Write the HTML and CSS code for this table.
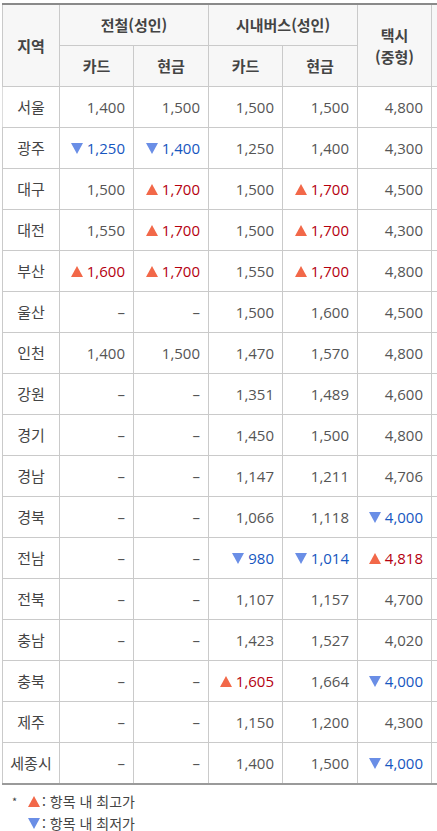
FILE: index.html
```html
<!DOCTYPE html>
<html lang="ko">
<head>
<meta charset="utf-8">
<title>대중교통 요금</title>
<link rel="stylesheet" href="styles.css">
</head>
<body>
<div class="wrap">
<table class="fare">
<colgroup>
<col class="c-region"><col class="c-num"><col class="c-num2"><col class="c-num"><col class="c-num2"><col class="c-num"><col class="c-extra">
</colgroup>
<thead>
<tr>
<th rowspan="2">지역</th>
<th colspan="2">전철(성인)</th>
<th colspan="2">시내버스(성인)</th>
<th rowspan="2" class="two">택시<br>(중형)</th>
<th rowspan="2" class="extra"></th>
</tr>
<tr>
<th>카드</th><th>현금</th><th>카드</th><th>현금</th>
</tr>
</thead>
<tbody>
<tr><th>서울</th><td>1,400</td><td>1,500</td><td>1,500</td><td>1,500</td><td>4,800</td><td class="extra"></td></tr>
<tr><th>광주</th><td class="lo"><i class="dn"></i>1,250</td><td class="lo"><i class="dn"></i>1,400</td><td>1,250</td><td>1,400</td><td>4,300</td><td class="extra"></td></tr>
<tr><th>대구</th><td>1,500</td><td class="hi"><i class="up"></i>1,700</td><td>1,500</td><td class="hi"><i class="up"></i>1,700</td><td>4,500</td><td class="extra"></td></tr>
<tr><th>대전</th><td>1,550</td><td class="hi"><i class="up"></i>1,700</td><td>1,500</td><td class="hi"><i class="up"></i>1,700</td><td>4,300</td><td class="extra"></td></tr>
<tr><th>부산</th><td class="hi"><i class="up"></i>1,600</td><td class="hi"><i class="up"></i>1,700</td><td>1,550</td><td class="hi"><i class="up"></i>1,700</td><td>4,800</td><td class="extra"></td></tr>
<tr><th>울산</th><td>–</td><td>–</td><td>1,500</td><td>1,600</td><td>4,500</td><td class="extra"></td></tr>
<tr><th>인천</th><td>1,400</td><td>1,500</td><td>1,470</td><td>1,570</td><td>4,800</td><td class="extra"></td></tr>
<tr><th>강원</th><td>–</td><td>–</td><td>1,351</td><td>1,489</td><td>4,600</td><td class="extra"></td></tr>
<tr><th>경기</th><td>–</td><td>–</td><td>1,450</td><td>1,500</td><td>4,800</td><td class="extra"></td></tr>
<tr><th>경남</th><td>–</td><td>–</td><td>1,147</td><td>1,211</td><td>4,706</td><td class="extra"></td></tr>
<tr><th>경북</th><td>–</td><td>–</td><td>1,066</td><td>1,118</td><td class="lo"><i class="dn"></i>4,000</td><td class="extra"></td></tr>
<tr><th>전남</th><td>–</td><td>–</td><td class="lo"><i class="dn"></i>980</td><td class="lo"><i class="dn"></i>1,014</td><td class="hi"><i class="up"></i>4,818</td><td class="extra"></td></tr>
<tr><th>전북</th><td>–</td><td>–</td><td>1,107</td><td>1,157</td><td>4,700</td><td class="extra"></td></tr>
<tr><th>충남</th><td>–</td><td>–</td><td>1,423</td><td>1,527</td><td>4,020</td><td class="extra"></td></tr>
<tr><th>충북</th><td>–</td><td>–</td><td class="hi"><i class="up"></i>1,605</td><td>1,664</td><td class="lo"><i class="dn"></i>4,000</td><td class="extra"></td></tr>
<tr><th>제주</th><td>–</td><td>–</td><td>1,150</td><td>1,200</td><td>4,300</td><td class="extra"></td></tr>
<tr><th>세종시</th><td>–</td><td>–</td><td>1,400</td><td>1,500</td><td class="lo"><i class="dn"></i>4,000</td><td class="extra"></td></tr>
</tbody>
</table>
</div>
<ul class="legend">
<li><span class="star">*</span><i class="up"></i>: 항목 내 최고가</li>
<li><span class="star"></span><i class="dn"></i>: 항목 내 최저가</li>
</ul>
</body>
</html>
```

FILE: styles.css
```css
html, body {
  margin: 0;
  padding: 0;
  background: #fff;
}
body {
  font-family: "Open Sans", "Noto Sans CJK KR", sans-serif;
  color: #555;
  width: 437px;
  overflow: hidden;
}
.wrap {
  padding: 3px 0 0 2px;
  width: 435px;
  overflow: hidden;
}
.fare {
  border-collapse: collapse;
  table-layout: fixed;
  width: 470px;
  border-top: 2px solid #8a8a8a;
  border-bottom: 2px solid #9a9a9a;
  font-size: 15px;
}
.c-region { width: 57px; }
.c-num { width: 74px; }
.c-num2 { width: 75px; }
.c-extra { width: 41px; }
.fare th, .fare td {
  border: 1px solid #cacaca;
  height: 40px;
  padding: 0;
  line-height: 20px;
}
.fare thead th {
  background: #f7f7f7;
  font-family: "Noto Sans CJK KR", sans-serif;
  font-weight: bold;
  color: #444;
  text-align: center;
  font-size: 15px;
}
.fare thead th.two { line-height: 22px; }
.fare thead th.extra { border-right: 0; }
.fare tbody th {
  font-family: "Noto Sans CJK KR", sans-serif;
  font-weight: normal;
  color: #444;
  text-align: center;
}
.fare tbody td {
  text-align: right;
  padding-right: 8px;
  color: #555;
}
.fare tbody td.extra { border-right: 0; }
.fare tbody tr:first-child th { border-left: 1px solid #dcdcdc; }
.fare td.hi { color: #b5000f; }
.fare td.lo { color: #1656c0; }
i.up, i.dn {
  display: inline-block;
  width: 0;
  height: 0;
  border-left: 6px solid transparent;
  border-right: 6px solid transparent;
  margin-right: 4px;
  vertical-align: 0;
}
i.up { border-bottom: 11px solid #f26849; }
i.dn { border-top: 11px solid #6a8ee6; }
.legend {
  list-style: none;
  margin: 0;
  padding: 5px 0 0 0;
  font-family: "Noto Sans CJK KR", sans-serif;
  font-size: 14px;
  color: #444;
}
.legend li {
  height: 22px;
  line-height: 22px;
  display: flex;
  align-items: center;
}
.legend .star {
  display: inline-block;
  width: 28px;
  padding-left: 12px;
  font-size: 11px;
  box-sizing: border-box;
}
.legend i.up, .legend i.dn { margin-right: 2px; }
```
